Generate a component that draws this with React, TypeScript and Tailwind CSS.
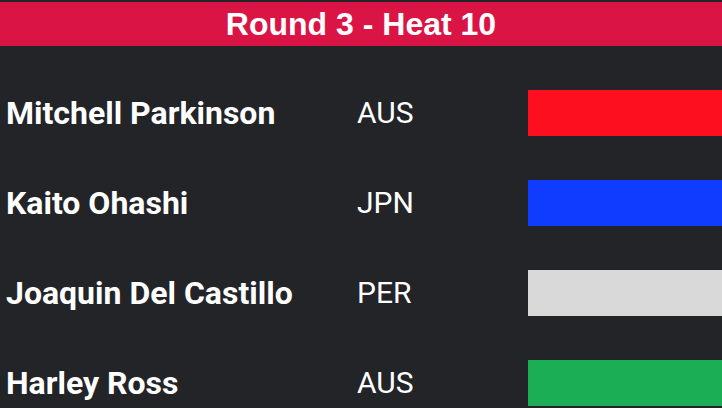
const riders = [
  { name: 'Mitchell Parkinson', country: 'AUS', color: 'bg-[#fe0f1f]' },
  { name: 'Kaito Ohashi', country: 'JPN', color: 'bg-[#0f3cff]' },
  { name: 'Joaquin Del Castillo', country: 'PER', color: 'bg-[#d9d9d9]' },
  { name: 'Harley Ross', country: 'AUS', color: 'bg-[#1bae55]' },
];

export default function App() {
  return (
    <div className="w-[722px] h-[408px] overflow-hidden bg-[#232428] pt-[2px]">
      <div className="h-[44px] bg-[#da1546] flex items-center justify-center">
        <h1 className="text-white text-[32px] font-bold leading-none font-['Liberation_Sans',Arial,sans-serif]">
          Round 3 - Heat 10
        </h1>
      </div>
      <div className="flex flex-col gap-[44px] pt-[44px] font-['Roboto',sans-serif] text-white">
        {riders.map((r) => (
          <div key={r.name} className="flex items-center h-[46px]">
            <div className="w-[356px] pl-[6px] text-[32px] font-bold leading-none">{r.name}</div>
            <div className="w-[172px] pl-[1px] text-[30px] leading-none">{r.country}</div>
            <div className={`flex-1 h-full ${r.color}`} />
          </div>
        ))}
      </div>
    </div>
  );
}
